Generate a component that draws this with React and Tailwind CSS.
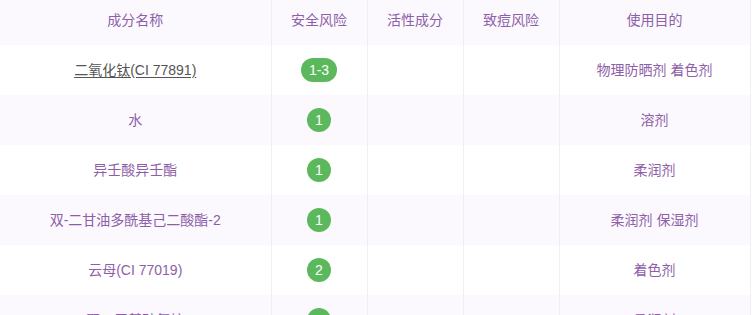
const rows = [
  { name: "二氧化钛(CI 77891)", risk: "1-3", use: "物理防晒剂 着色剂", link: true },
  { name: "水", risk: "1", use: "溶剂" },
  { name: "异壬酸异壬酯", risk: "1", use: "柔润剂" },
  { name: "双-二甘油多酰基己二酸酯-2", risk: "1", use: "柔润剂 保湿剂" },
  { name: "云母(CI 77019)", risk: "2", use: "着色剂" },
  { name: "聚二甲基硅氧烷", risk: "1", use: "柔润剂" },
];

function Badge({ value }) {
  return (
    <span
      className={`inline-flex h-6 items-center justify-center rounded-full bg-[#5cb85c] text-[14px] text-white ${
        value.length > 1 ? "w-9" : "w-6"
      }`}
    >
      {value}
    </span>
  );
}

export default function App() {
  const cell = "border-r border-[#f0eef3] text-center align-middle";

  return (
    <div
      className="h-[315px] w-[754px] overflow-hidden bg-white"
      style={{ fontFamily: '"Liberation Sans", "Noto Sans CJK SC", sans-serif' }}
    >
      <table className="w-[750px] table-fixed border-collapse text-[14px] text-[#8e5ea8]">
        <colgroup>
          <col className="w-[271px]" />
          <col className="w-[96px]" />
          <col className="w-[96px]" />
          <col className="w-[96px]" />
          <col className="w-[191px]" />
        </colgroup>
        <thead>
          <tr className="h-[45px] bg-[#fbf9fe]">
            <th className={`${cell} pb-1 font-normal`}>成分名称</th>
            <th className={`${cell} pb-1 font-normal`}>安全风险</th>
            <th className={`${cell} pb-1 font-normal`}>活性成分</th>
            <th className={`${cell} pb-1 font-normal`}>致痘风险</th>
            <th className={`${cell} pb-1 font-normal`}>使用目的</th>
          </tr>
        </thead>
        <tbody>
          {rows.map((r, i) => (
            <tr
              key={r.name}
              className={`h-[50px] ${i % 2 === 0 ? "bg-white" : "bg-[#fbf9fe]"}`}
            >
              <td className={cell}>
                {r.link ? (
                  <span className="text-[#555] underline underline-offset-2">
                    {r.name}
                  </span>
                ) : (
                  r.name
                )}
              </td>
              <td className={cell}>
                <Badge value={r.risk} />
              </td>
              <td className={cell}></td>
              <td className={cell}></td>
              <td className={cell}>{r.use}</td>
            </tr>
          ))}
        </tbody>
      </table>
    </div>
  );
}
